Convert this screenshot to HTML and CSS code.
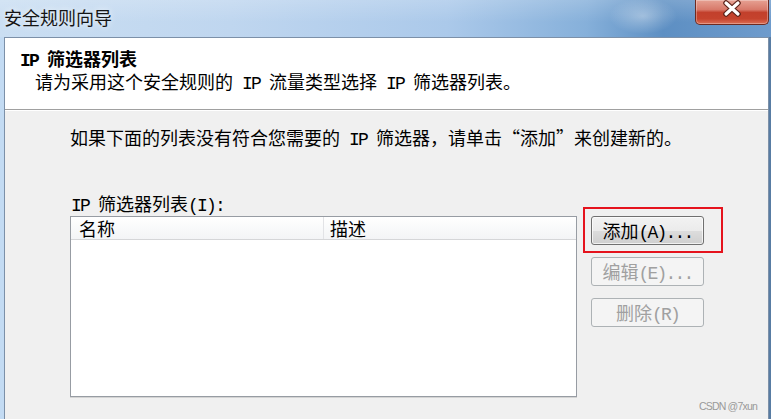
FILE: index.html
```html
<!DOCTYPE html>
<html lang="zh-CN">
	<head>
		<meta charset="utf-8">
		<title>安全规则向导</title>
		<link rel="stylesheet" href="styles.css">
	</head>
	<body>
		<div class="window">
			<div class="titleBar">
				<span class="titleText">安全规则向导</span>
				<div class="closeBtn">
					<svg width="22" height="17" viewBox="0 0 22 17">
						<path d="M5 3L17 14M17 3L5 14" stroke="#5a2118" stroke-width="5.5" stroke-linecap="round"/>
						<path d="M5 3L17 14M17 3L5 14" stroke="#fff" stroke-width="3.2" stroke-linecap="round"/>
					</svg>
				</div>
			</div>
			<div class="client">
				<div class="header">
					<h1 class="headTitle"><span class="en">IP </span>筛选器列表</h1>
					<p class="headSub">请为采用这个安全规则的<span class="en"> IP </span>流量类型选择<span class="en"> IP </span>筛选器列表。</p>
				</div>
				<div class="content">
					<p class="intro">如果下面的列表没有符合您需要的<span class="en"> IP </span>筛选器，请单击<span class="q">“</span>添加<span class="q">”</span>来创建新的。</p>
					<div class="listArea">
						<label class="listLabel"><span class="en">IP </span>筛选器列表<span class="en">(I):</span></label>
						<div class="listView">
							<div class="lvHead">
								<div class="colName">名称</div>
								<div class="colDesc">描述</div>
							</div>
						</div>
						<div class="btnCol">
							<div class="addWrap">
								<button class="btn">添加<span class="en">(A)...</span></button>
							</div>
							<button class="btn" disabled>编辑<span class="en">(E)...</span></button>
							<button class="btn" disabled>删除<span class="en">(R)</span></button>
						</div>
					</div>
				</div>
			</div>
			<div class="watermark">CSDN @7xun</div>
		</div>
	</body>
</html>
```

FILE: styles.css
```css
*{
	margin: 0;
	padding: 0;
	box-sizing: border-box;
}
html,body{
	width: 771px;
	height: 419px;
	overflow: hidden;
}
body{
	font-family: "Noto Sans CJK SC", sans-serif;
	font-size: 18px;
	color: #000;
}
/* 英文部分用等宽衬线，宽度压到半角；line-height 设 1 免得把行撑高 */
.en{
	font-family: "Liberation Mono", "Noto Sans CJK SC", monospace;
	letter-spacing: -0.1em;
	line-height: 1;
}
/* 引号用全角字形 */
.q{
	font-feature-settings: "fwid";
}
.window{
	position: relative;
	height: 419px;
	display: flex;
	flex-direction: column;
	background: linear-gradient(to right, #c3dbf3 0, #c3dbf3 4px, #587ca3 4px);
}
.titleBar{
	height: 37px;
	display: flex;
	justify-content: space-between;
	align-items: flex-start;
	background:
		radial-gradient(ellipse 34px 18px at 643px 16px, rgba(255,255,255,.35), rgba(255,255,255,0)),
		linear-gradient(to bottom, rgba(255,255,255,.18), rgba(255,255,255,0) 60%),
		linear-gradient(to right, #cadef2 0%, #bfd6ef 30%, #abc9ea 58%, #86b0da 76%, #5d8fc3 86%, #6e9bcc 100%);
}
.titleText{
	margin: 4px 0 0 4px;
	line-height: 26px;
	color: #151515;
	text-shadow: 0 0 6px rgba(255,255,255,.9);
}
.closeBtn{
	width: 74px;
	height: 25px;
	margin-right: 2px;
	display: flex;
	justify-content: center;
	border: 1px solid #6e2a20;
	border-top: none;
	border-radius: 0 0 5px 5px;
	background: linear-gradient(to bottom, #e6a193 0%, #d8796a 40%, #c2402c 52%, #c5432d 78%, #dc6e55 100%);
	box-shadow: inset 0 0 0 1px rgba(255,255,255,.3);
}
.client{
	flex: 1;
	margin: 0 2px 0 4px;
	border: 1px solid #7c90a8;
	border-bottom: none;
	background: #f0f0f0;
	display: flex;
	flex-direction: column;
}
.header{
	background: #fff;
	padding: 9px 0 16px 15px;
	border-bottom: 1px solid #a0a0a0;
}
.headTitle{
	font-size: 18px;
	font-weight: bold;
	line-height: 22px;
}
.headSub{
	line-height: 22px;
	padding-left: 15px;
}
.content{
	flex: 1;
	padding: 16px 0 0 65px;
	box-shadow: inset 0 1px 0 #fff;
}
.intro{
	line-height: 22px;
}
.listArea{
	margin-top: 43px;
	display: grid;
	grid-template-columns: 507px 113px;
	column-gap: 14px;
}
.listLabel{
	grid-column: 1 / 3;
	line-height: 22px;
	margin-bottom: 1px;
	padding-left: 1px;
}
.listView{
	height: 181px;
	background: #fff;
	border: 1px solid #979ca3;
	box-shadow: 0 1px 0 #d4d4d4;
}
.lvHead{
	display: flex;
	height: 23px;
	line-height: 22px;
	background: linear-gradient(to bottom, #fff, #f3f4f6);
	border-bottom: 1px solid #d5d6d8;
}
.colName{
	width: 253px;
	padding-left: 8px;
	border-right: 1px solid #e2e3e6;
}
.colDesc{
	flex: 1;
	padding-left: 6px;
}
.btnCol{
	display: flex;
	flex-direction: column;
	gap: 12px;
}
.btn{
	display: block;
	width: 113px;
	height: 29px;
	font: inherit;
	font-size: 18px;
	line-height: 27px;
	color: #000;
	text-align: center;
	border: 1px solid #707070;
	border-radius: 3px;
	background: linear-gradient(to bottom, #f2f2f2 0%, #ebebeb 50%, #dddddd 51%, #cfcfcf 100%);
	box-shadow: inset 0 0 0 1px rgba(255,255,255,.7);
}
.btn:disabled{
	color: #a0a0a0;
	border-color: #adb2b5;
	background: #f4f4f4;
	box-shadow: none;
}
.addWrap{
	position: relative;
}
/* 截图上的红色标注框 */
.addWrap::after{
	content: "";
	position: absolute;
	left: -8px;
	top: -9px;
	right: -19px;
	bottom: -8px;
	border: 2px solid #e5131d;
}
.watermark{
	position: absolute;
	right: 14px;
	bottom: 6px;
	font-family: "Liberation Sans", sans-serif;
	font-size: 10.5px;
	letter-spacing: -0.8px;
	line-height: 13px;
	color: #999;
}
```
